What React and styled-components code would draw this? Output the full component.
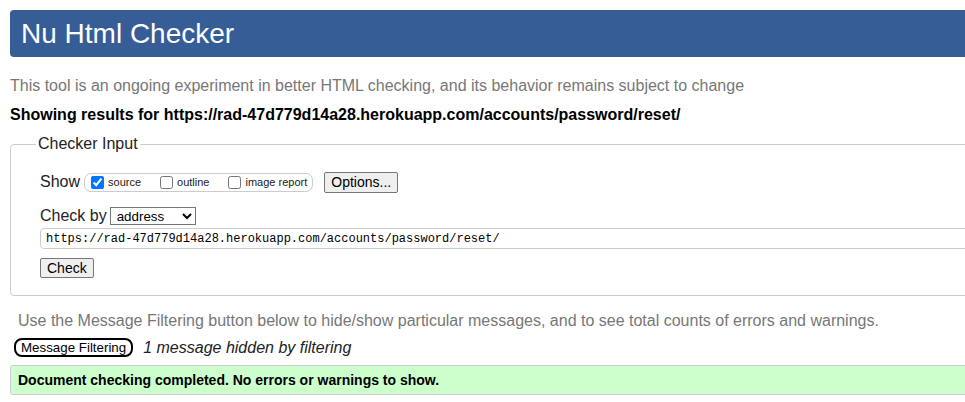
import React from 'react';
import styled, { createGlobalStyle } from 'styled-components';

const GlobalStyle = createGlobalStyle`
  body {
    margin: 0;
    background: #ffffff;
    font-family: 'Liberation Sans', Arial, sans-serif;
    color: #222222;
    overflow: hidden;
  }
`;

const Page = styled.div`
  width: 1240px;
  padding: 10px 0 0 10px;
`;

const Header = styled.header`
  display: flex;
  align-items: center;
  height: 47px;
  padding-left: 11px;
  background: #365d95;
  border-radius: 4px;
`;

const Title = styled.h1`
  margin: 0;
  font-size: 28px;
  font-weight: normal;
  color: #ffffff;
  line-height: 32px;
`;

const Note = styled.p`
  margin: ${(p) => p.$top || 0}px 0 0 ${(p) => p.$indent || 0}px;
  font-size: 16px;
  line-height: 18px;
  color: #777777;
`;

const Results = styled.p`
  margin: 11px 0 0;
  font-size: 16px;
  line-height: 18px;
  font-weight: bold;
  color: #000000;
`;

const Fieldset = styled.fieldset`
  margin: 11px 0 0;
  padding: 18px 0 17px 29px;
  border: 1px solid #cccccc;
  border-radius: 4px;
  min-width: 0;
`;

const Legend = styled.legend`
  margin-left: -4px;
  padding: 0 2px;
  font-size: 16px;
  line-height: 18px;
  color: #222222;
`;

const Row = styled.div`
  display: flex;
  align-items: center;
  height: ${(p) => p.$h || 20}px;
  margin-top: ${(p) => p.$top || 0}px;
`;

const Label = styled.span`
  font-size: 16px;
  margin-right: ${(p) => p.$gap || 4}px;
`;

const ShowGroup = styled.div`
  display: flex;
  align-items: center;
  height: 17px;
  padding: 0 5px 0 6px;
  border: 1px solid #cccccc;
  border-radius: 7px;
`;

const Option = styled.label`
  display: flex;
  align-items: center;
  font-size: 11px;
  margin-right: ${(p) => (p.$last ? 0 : 19)}px;
`;

const Box = styled.input`
  width: 13px;
  height: 13px;
  margin: 0 4px 0 0;
  accent-color: #0075ff;
`;

const Button = styled.button`
  height: ${(p) => p.$h || 21}px;
  margin-left: ${(p) => p.$left || 0}px;
  padding: 0 6px;
  font-family: 'Liberation Sans', Arial, sans-serif;
  font-size: 14px;
  color: #000000;
  background: #efefef;
  border: 1px solid #767676;
  border-radius: 2px;
`;

const Select = styled.select`
  width: 86px;
  height: 18px;
  padding: 0 0 0 2px;
  font-family: 'Liberation Sans', Arial, sans-serif;
  font-size: 13.33px;
  color: #000000;
  background: #ffffff;
  border: 1px solid #767676;
  border-radius: 0;
`;

const UrlInput = styled.input`
  width: 100%;
  height: 21px;
  box-sizing: border-box;
  padding: 0 5px;
  font-family: 'Liberation Mono', 'Courier New', monospace;
  font-size: 12px;
  color: #000000;
  border: 1px solid #cccccc;
  border-radius: 4px;
`;

const FilterRow = styled.div`
  display: flex;
  align-items: center;
  height: 21px;
  margin-top: 7px;
`;

const FilterButton = styled.button`
  height: 19px;
  margin-left: 4px;
  padding: 0 5px;
  font-family: 'Liberation Sans', Arial, sans-serif;
  font-size: 13.33px;
  color: #000000;
  background: #ffffff;
  border: 2px solid #000000;
  border-radius: 8px;
`;

const Hidden = styled.em`
  margin-left: 10px;
  font-size: 16px;
  color: #222222;
`;

const Success = styled.div`
  display: flex;
  align-items: center;
  height: 28px;
  margin-top: 7px;
  padding-left: 7px;
  font-size: 14px;
  font-weight: bold;
  color: #000000;
  background: #ccffcc;
  border: 1px solid #cccccc;
  border-radius: 3px;
`;

const url = 'https://rad-47d779d14a28.herokuapp.com/accounts/password/reset/';

export default function App() {
  return (
    <Page>
      <GlobalStyle />
      <Header>
        <Title>Nu Html Checker</Title>
      </Header>
      <Note $top={20}>
        This tool is an ongoing experiment in better HTML checking, and its behavior remains subject to change
      </Note>
      <Results>Showing results for {url}</Results>
      <Fieldset>
        <Legend>Checker Input</Legend>
        <Row $h={22}>
          <Label>Show</Label>
          <ShowGroup>
            <Option>
              <Box type="checkbox" defaultChecked />source
            </Option>
            <Option>
              <Box type="checkbox" />outline
            </Option>
            <Option $last>
              <Box type="checkbox" />image report
            </Option>
          </ShowGroup>
          <Button $left={11}>Options...</Button>
        </Row>
        <Row $top={13}>
          <Label $gap={3}>Check by</Label>
          <Select defaultValue="address">
            <option value="address">address</option>
            <option value="file">file upload</option>
            <option value="text">text input</option>
          </Select>
        </Row>
        <Row $h={21} $top={2}>
          <UrlInput type="url" defaultValue={url} />
        </Row>
        <Row $top={9}>
          <Button $h={20}>Check</Button>
        </Row>
      </Fieldset>
      <Note $top={16} $indent={8}>
        Use the Message Filtering button below to hide/show particular messages, and to see total counts of errors and warnings.
      </Note>
      <FilterRow>
        <FilterButton>Message Filtering</FilterButton>
        <Hidden>1 message hidden by filtering</Hidden>
      </FilterRow>
      <Success>Document checking completed. No errors or warnings to show.</Success>
    </Page>
  );
}
